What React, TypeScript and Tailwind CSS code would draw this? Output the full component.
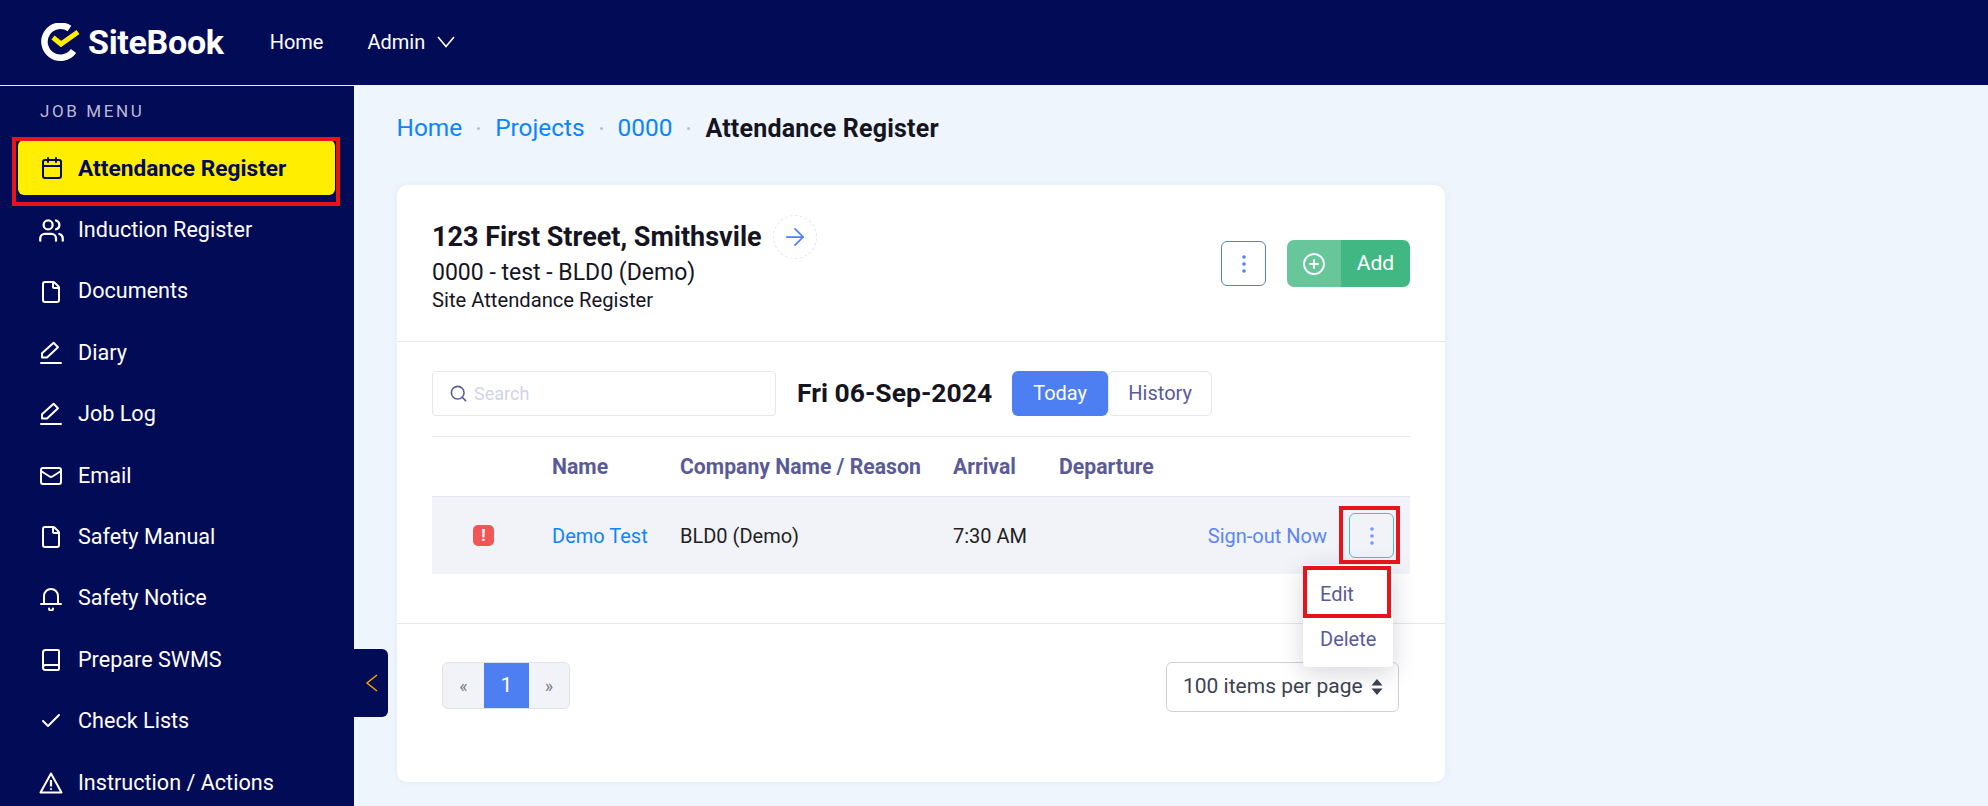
import { ArrowRight, Book, Calendar, Check, CirclePlus, EllipsisVertical, File, Mail, Search, Users } from 'lucide-react'
import type { SVGProps } from 'react'

// icons lucide has no close match for
const Pen = (props: SVGProps<SVGSVGElement>) => (
  <svg viewBox="0 0 24 24" fill="none" stroke="currentColor" strokeWidth="2" strokeLinejoin="round" strokeLinecap="round" {...props}>
    <path d="M3 16.5v-4.2L14.6 1.8l4.4 4.4L8 16.5z" />
    <path d="M2 22h20" />
  </svg>
)

const Bell = (props: SVGProps<SVGSVGElement>) => (
  <svg viewBox="0 0 24 24" fill="none" stroke="currentColor" strokeWidth="2" strokeLinecap="round" {...props}>
    <path d="M5 16V9a7 7 0 0 1 14 0v7" />
    <path d="M2 17h20" />
    <path d="M10 21.5a2 2 0 0 0 4 0" />
  </svg>
)

const Warning = (props: SVGProps<SVGSVGElement>) => (
  <svg viewBox="0 0 24 24" fill="none" stroke="currentColor" strokeWidth="2" strokeLinejoin="round" {...props}>
    <path d="M12 2.5L1.5 21.5h21z" />
    <path d="M12 9v6.5M12 17.2v1.6" strokeWidth="2.2" />
  </svg>
)

const menu = [
  { label: 'Induction Register', icon: Users, size: 'w-[27px] h-[27px] -ml-[1.5px] -mr-[1.5px]' },
  { label: 'Documents', icon: File, size: 'w-[24px] h-[24px]' },
  { label: 'Diary', icon: Pen, size: 'w-[24px] h-[24px]' },
  { label: 'Job Log', icon: Pen, size: 'w-[24px] h-[24px]' },
  { label: 'Email', icon: Mail, size: 'w-[24px] h-[24px]' },
  { label: 'Safety Manual', icon: File, size: 'w-[24px] h-[24px]' },
  { label: 'Safety Notice', icon: Bell, size: 'w-[24px] h-[24px]' },
  { label: 'Prepare SWMS', icon: Book, size: 'w-[24px] h-[24px]' },
  { label: 'Check Lists', icon: Check, size: 'w-[24px] h-[24px]' },
  { label: 'Instruction / Actions', icon: Warning, size: 'w-[24px] h-[24px]' },
]

const Logo = () => (
  <svg width="40" height="40" viewBox="0 0 40 40" fill="none">
    <path d="M29.5 5.5A16 16 0 1 0 33.5 28" stroke="#fff" strokeWidth="6.5" />
    <path d="M13 14.5l8 6.5L38 9" stroke="#ffee00" strokeWidth="5" />
  </svg>
)

const App = () => {
  return (
    <div className="h-screen overflow-hidden flex flex-col bg-[#eef5fd] font-['Roboto',sans-serif]">
      <header className="h-[85px] shrink-0 bg-[#020b56] flex items-center pl-10 text-white">
        <Logo />
        <span className="ml-[8px] text-[34px] font-bold tracking-[-0.3px]">SiteBook</span>
        <a className="ml-[46px] text-[20px] -mt-[2px]">Home</a>
        <a className="ml-[44px] text-[20px] -mt-[2px]">Admin</a>
        <svg className="ml-[12px] -mt-[2px]" width="18" height="12" viewBox="0 0 18 12" fill="none" stroke="currentColor" strokeWidth="1.6">
          <path d="M1 1l8 9.5L17 1" />
        </svg>
      </header>

      <div className="flex flex-1 min-h-0 relative">
        <aside className="w-[354px] shrink-0 bg-[#020b56] border-t border-[#e8e9f4] text-white">
          <div className="pl-10 pt-[14px] text-[17px] leading-[22px] tracking-[2.6px] text-[#b9bbd6]">JOB MENU</div>
          <div className="mt-[18px] mx-[18px] w-[317px] h-[55px] bg-[#ffee00] rounded-[6px] flex items-center pl-[22px] text-[#020b56]">
            <Calendar className="w-[24px] h-[24px]" strokeWidth={2} />
            <span className="ml-[14px] mt-[3px] text-[22.7px] font-bold">Attendance Register</span>
          </div>
          <nav className="mt-[4.5px]">
            {menu.map(({ label, icon: Icon, size }) => (
              <div key={label} className="h-[61.4px] flex items-center pl-[39px]">
                <Icon className={size} strokeWidth={2} />
                <span className="ml-[15px] text-[21.6px]">{label}</span>
              </div>
            ))}
          </nav>
        </aside>

        <main className="flex-1 pl-[42.5px] min-w-0">
          <div className="flex items-center h-[86px] pt-[1px] text-[24.4px] text-[#0d84ff]">
            <a>Home</a>
            <span className="mx-[15px] w-[3px] h-[3px] rounded-full bg-[#b9bbd6]" />
            <a>Projects</a>
            <span className="mx-[15px] w-[3px] h-[3px] rounded-full bg-[#b9bbd6]" />
            <a>0000</a>
            <span className="mx-[15px] w-[3px] h-[3px] rounded-full bg-[#b9bbd6]" />
            <span className="font-bold text-[25px] tracking-[0.2px] text-[#15141f]">Attendance Register</span>
          </div>

          <section className="mt-[14px] ml-[0.5px] w-[1048px] h-[597px] bg-white rounded-[10px] shadow-[0_0_6px_rgba(80,100,160,0.08)]">
            <div className="h-[157px] border-b border-[#e4e6ef] pl-[35px] pr-[35px] flex items-center justify-between">
              <div className="text-[#15141f]">
                <div className="flex items-center">
                  <h2 className="text-[27px] leading-[30px] font-bold">123 First Street, Smithsvile</h2>
                  <span className="ml-[11px] w-[44px] h-[44px] rounded-full border border-dashed border-[#e4e6ef] flex items-center justify-center text-[#4d7ef2]">
                    <ArrowRight className="w-[28px] h-[28px]" strokeWidth={1.5} />
                  </span>
                </div>
                <div className="text-[23px] leading-[26px] mt-[1px]">0000 - test - BLD0 (Demo)</div>
                <div className="text-[20.2px] leading-[24px] mt-[2px]">Site Attendance Register</div>
              </div>
              <div className="flex items-center gap-[21px] mt-[1px]">
                <button className="w-[45px] h-[45px] rounded-[6px] border border-[#4d7ef2] flex items-center justify-center text-[#4d7ef2]">
                  <EllipsisVertical className="w-[24px] h-[24px]" strokeWidth={1.6} />
                </button>
                <button className="flex h-[47px] w-[123px] rounded-[7px] overflow-hidden text-white">
                  <span className="w-[54px] bg-[#68c69b] flex items-center justify-center">
                    <CirclePlus className="w-[24px] h-[24px]" strokeWidth={1.8} />
                  </span>
                  <span className="flex-1 bg-[#41b883] flex items-center justify-center text-[21px]">Add</span>
                </button>
              </div>
            </div>

            <div className="pl-[35px] pr-[35px]">
              <div className="h-[95px] pt-[8px] flex items-center border-b border-[#e4e6ef]">
                <div className="w-[344px] h-[45px] rounded-[4px] border border-[#e4e6ef] flex items-center pl-[16px]">
                  <Search className="w-[19px] h-[19px] text-[#5a5a99]" strokeWidth={2} />
                  <span className="ml-[6px] text-[18px] text-[#d3d3e6]">Search</span>
                </div>
                <div className="ml-[21px] text-[26.5px] font-bold text-[#15141f]">Fri 06-Sep-2024</div>
                <div className="ml-[20px] flex h-[45px] text-[20px]">
                  <span className="w-[96px] bg-[#4d7ef2] text-white rounded-[6px] flex items-center justify-center">Today</span>
                  <span className="w-[104px] border border-[#e4e6ef] rounded-[6px] text-[#5a5a99] flex items-center justify-center">History</span>
                </div>
              </div>

              <div className="h-[59px] grid grid-cols-[120px_128px_273px_106px_1fr] items-center text-[21.2px] font-bold text-[#5a5a99]">
                <span />
                <span>Name</span>
                <span>Company Name / Reason</span>
                <span>Arrival</span>
                <span>Departure</span>
              </div>

              <div className="relative h-[78px] bg-[#f2f3f8] border-t border-[#e4e6ef] grid grid-cols-[120px_128px_273px_106px_1fr] items-center text-[20px]">
                <span className="pl-[41px]">
                  <span className="w-[21px] h-[21px] rounded-[5px] bg-[#f25555] text-white text-[16px] font-bold flex items-center justify-center">!</span>
                </span>
                <a className="text-[#0d84ff]">Demo Test</a>
                <span className="text-[#222]">BLD0 (Demo)</span>
                <span className="text-[#222]">7:30 AM</span>
                <span />
                <div className="absolute right-[16px] top-[16px] flex items-center">
                  <a className="text-[#5b85f5]">Sign-out Now</a>
                  <button className="ml-[22px] w-[45px] h-[45px] rounded-[6px] border border-[#56b4f2] flex items-center justify-center text-[#6f9bf7]">
                    <EllipsisVertical className="w-[24px] h-[24px]" strokeWidth={1.6} />
                  </button>
                </div>
              </div>
            </div>

            <div className="mt-[49px] h-[170px] border-t border-[#e4e6ef] pl-[45px] pr-[46px] pt-[38px] flex justify-between items-start">
              <div className="flex h-[47px] w-[128px] rounded-[6px] border border-[#e0e2ea] bg-[#f2f3f8] text-[#7b7b8c] overflow-hidden">
                <span className="w-[41px] flex items-center justify-center text-[18px]">«</span>
                <span className="w-[45px] -my-px bg-[#4d7ef2] text-white flex items-center justify-center text-[21px]">1</span>
                <span className="flex-1 flex items-center justify-center text-[18px]">»</span>
              </div>
              <div className="w-[233px] h-[50px] rounded-[6px] border border-[#cfd1d9] flex items-center pl-[16px] text-[21px] text-[#3d4250]">
                100 items per page
                <svg className="ml-[8px]" width="12" height="16" viewBox="0 0 12 16" fill="currentColor">
                  <path d="M6 0l5.5 6.5H.5zM6 16L.5 9.5h11z" />
                </svg>
              </div>
            </div>
          </section>

          <div className="absolute left-[1303px] top-[480px] w-[90px] h-[102px] bg-white rounded-[4px] shadow-[0_6px_24px_rgba(30,30,60,0.18)] text-[20px] text-[#5a5a99] pt-[6px] pl-[17px]">
            <div className="h-[45px] flex items-center">Edit</div>
            <div className="h-[45px] flex items-center">Delete</div>
          </div>
          <div className="absolute left-[1339px] top-[421px] w-[61px] h-[58px] border-[4px] border-[#e8141c]" />
          <div className="absolute left-[1303px] top-[481px] w-[88px] h-[52px] border-[4px] border-[#e8141c]" />
        </main>

        <div className="absolute left-[12px] top-[52px] w-[328px] h-[69px] border-[4px] border-[#e8141c]" />
        <div className="absolute left-[354px] top-[564px] w-[34px] h-[68px] bg-[#020b56] rounded-r-[6px] flex items-center justify-center text-[#f0a800]">
          <svg width="13" height="18" viewBox="0 0 13 18" fill="none" stroke="currentColor" strokeWidth="1.5">
            <path d="M12 1L2 9l10 8" />
          </svg>
        </div>
      </div>
    </div>
  )
}

export default App
